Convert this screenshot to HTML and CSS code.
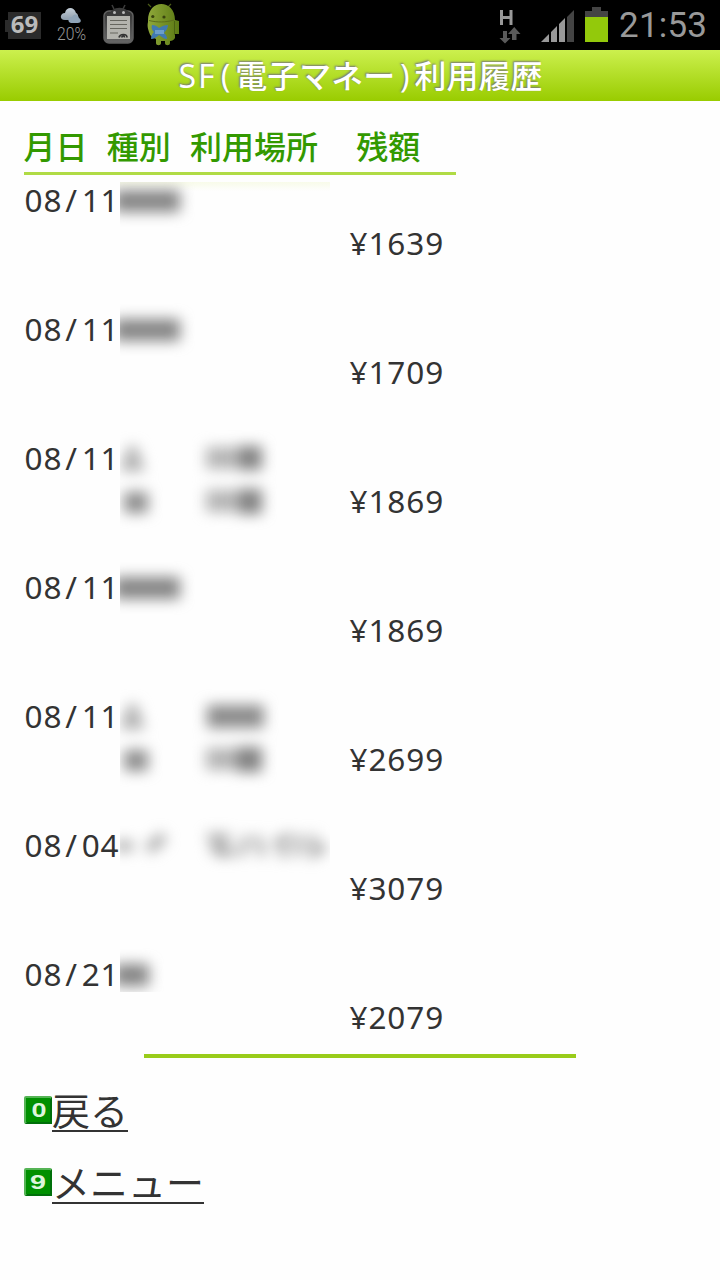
FILE: index.html
```html
<!DOCTYPE html>
<html lang="ja">
<head>
<meta charset="utf-8">
<title>SF(電子マネー)利用履歴</title>
<link rel="stylesheet" href="styles.css">
</head>
<body>
<header class="status">
  <svg class="status-left" width="200" height="50" viewBox="0 0 200 50">
    <defs>
      <linearGradient id="cloud" x2="0" y2="1"><stop stop-color="#c3ced8"/><stop offset="1" stop-color="#8d9cab"/></linearGradient>
      <linearGradient id="bot" x2="1"><stop stop-color="#8fa83a"/><stop offset="1" stop-color="#5c7a14"/></linearGradient>
      <linearGradient id="board" x2="0" y2="1"><stop stop-color="#333"/><stop offset="1" stop-color="#666"/></linearGradient>
    </defs>
    <path d="M8 12h33v27H8v-7H5V20h3z" fill="#2b2b2b"/>
    <text x="24.500" y="33" text-anchor="middle" class="level">69</text>
    <path d="M65 20c-6 0-5-7 0-7 1-6 9-7 11 0 3 1 3 7-1 7z" fill="url(#cloud)"/>
    <path d="M71 23c-4-1-3-6 1-6 2-4 6-3 7 1 3 2 2 5-1 5z" fill="#8fa4b8"/>
    <text x="57" y="39.500" class="rain" textLength="29" lengthAdjust="spacingAndGlyphs">20%</text>
    <path d="M114 9l-2-4M123 9l2-4" stroke="#3d3d3d" stroke-width="1.500"/>
    <rect x="104" y="11" width="29" height="32" rx="5" fill="url(#board)" stroke="#606060" stroke-width="1.500"/>
    <path d="M109 16c1-11 20-11 21 0z" fill="#3b3b3b"/>
    <circle cx="114.500" cy="12.500" r="1.500" fill="#bbb"/><circle cx="123.500" cy="12.500" r="1.500" fill="#bbb"/>
    <path d="M107 16h23v23h-23z" fill="#b4b4ae"/>
    <path d="M110 20.500h17M110 24.500h17M110 28.500h17M110 33h8" stroke="#66665f"/>
    <path d="M119 37.500c1-4 8-4 8 0M121.500 37.500c1-2 3-2 3 0" stroke="#333" stroke-width="1.700" fill="none"/>
    <path d="M151 7l-3-3M168 7l3-3" stroke="#4b5c17" stroke-width="1.200"/>
    <path d="M148 22c-1-24 27-23 27-2l4 1v13h-4v4c-1 2-3 3-5 3v2c0 3-5 3-5 0v-2h-4v2c0 3-5 3-5 0v-4c-3-1-6-3-7-7-1-3-2-6-1-10z" fill="url(#bot)"/>
    <circle cx="152.800" cy="16.500" r="1.600" fill="#39440e"/><circle cx="164" cy="17" r="1.600" fill="#39440e"/>
    <path d="M149 20.500c8 2 17 2 25-.5" stroke="#5b6d1c" fill="none"/>
    <path d="M174.500 21v14" stroke="#4b6212"/>
    <path d="M152 25c3 0 5 1 7 3 3-2 6-3 9-3 0 3-2 6-4 8 2 2 3 3 3 6-3 0-5-2-8-4-2 2-5 4-8 4 0-3 1-5 3-7-2-2-3-4-2-7z" fill="#4079b0"/>
    <path d="M155 30h9v4h-9z" fill="#6b9ecb"/>
  </svg>
  <svg class="status-right" width="240" height="50" viewBox="480 0 240 50">
    <path d="M501.500 10v15M511 10v15M501 17.500h10" stroke="#999" stroke-width="3"/>
    <path d="M503 31h4v7h3.500l-5.500 5.500-5.500-5.500h3.500zM512 40h4.500v-6h4l-6.300-7-6.200 7h4z" fill="#5a5a5a"/>
    <path d="M541 42l8-8v8zM551 32l6-6v16h-6zM559 24l6-6v24h-6z" fill="#999"/>
    <path d="M567 17l7-7v32h-7z" fill="#444"/>
    <path d="M585 17v-6h7V7h9v4h7v6z" fill="#444"/>
    <path d="M585 17h23v25h-23z" fill="#93c90b"/>
    <text x="619" y="36.800" class="clock" textLength="88">21:53</text>
  </svg>
</header>
<h1 class="title"><i>S</i><i>F</i><i>(</i>電子マネー<i>)</i>利用履歴</h1>
<main class="page">
  <div class="columns"><span>月日</span><span>種別</span><span class="wide">利用場所</span><span>残額</span></div>
  <div class="history">
    <div class="entry"><div class="date">08<i>/</i>11</div><div class="balance">¥1639</div></div>
    <div class="entry"><div class="date">08<i>/</i>11</div><div class="balance">¥1709</div></div>
    <div class="entry"><div class="date">08<i>/</i>11</div><div class="balance">¥1869</div></div>
    <div class="entry"><div class="date">08<i>/</i>11</div><div class="balance">¥1869</div></div>
    <div class="entry"><div class="date">08<i>/</i>11</div><div class="balance">¥2699</div></div>
    <div class="entry"><div class="date">08<i>/</i>04</div><div class="balance">¥3079</div></div>
    <div class="entry"><div class="date">08<i>/</i>21</div><div class="balance">¥2079</div></div>
    <svg class="redaction" width="210" height="810" viewBox="0 182 210 810">
      <defs>
        <linearGradient id="edge" x2="0" y2="1"><stop stop-color="#f8fbe9"/><stop offset="1" stop-color="#fefefe"/></linearGradient>
        <filter id="soft" filterUnits="userSpaceOnUse" x="-30" y="150" width="270" height="880" color-interpolation-filters="sRGB"><feGaussianBlur stdDeviation="7"/></filter>
      </defs>
      <path d="M0 182h210v810H0z" fill="#fefefe"/>
      <path d="M0 182h210v9H0z" fill="url(#edge)"/>
      <g filter="url(#soft)">
        <g fill="#858585">
          <path d="M-6 190h66v22H-6zM-6 319h66v22H-6zM-6 577h66v22H-6z"/>
          <path d="M87 705h57v23H87z" fill="#8c8c8c"/>
          <path d="M-6 964h35v22H-6z"/>
        </g>
        <g fill="#828282"><path d="M118 446h24v24h-24zM118 489h24v25h-24zM117 747h25v25h-25z"/></g>
        <g fill="#b5b5b5"><path d="M86 447h31v22H86zM86 490h31v22H86zM86 748h31v22H86z"/></g>
        <g fill="#8c8c8c"><path d="M4 492h24v21H4zM4 750h24v21H4z"/></g>
        <g fill="#adadad"><path d="M9 446h7l9 25H0zM9 704h7l9 25H0z"/></g>
        <g fill="none" stroke="#a6a6a6" stroke-width="7">
          <path d="M-4 846h17M28 850l16-14" stroke-width="10"/>
          <path d="M87 837h23M90 848h20M99 835v18h15M127 836l-6 20M137 836l6 20M154 844l17-9M163 842v16M180 835l-3 21M193 835v19l13-8"/>
        </g>
      </g>
    </svg>
  </div>
  <div class="divider"></div>
  <nav class="links">
    <a href="#"><svg width="28" height="28" viewBox="0 0 28 28"><rect width="28" height="28" rx="2" fill="#55b455"/><path d="M2 2h24v24H2z" fill="#009000"/><path d="M28 1v27H1l2-2h23V3z" fill="#00700a"/><text x="15" y="21" class="key" text-anchor="middle" textLength="15" lengthAdjust="spacingAndGlyphs">0</text></svg><span>戻る</span></a>
    <a href="#"><svg width="28" height="28" viewBox="0 0 28 28"><rect width="28" height="28" rx="2" fill="#55b455"/><path d="M2 2h24v24H2z" fill="#009000"/><path d="M28 1v27H1l2-2h23V3z" fill="#00700a"/><text x="14" y="21" class="key" text-anchor="middle" textLength="16" lengthAdjust="spacingAndGlyphs">9</text></svg><span>メニュー</span></a>
  </nav>
</main>
</body>
</html>
```
FILE: styles.css
```css
* { box-sizing: border-box; }
body {
  margin: 0;
  min-height: 1280px;
  background: #fefefe;
  color: #333;
  font: 32px "Noto Sans", "Noto Sans CJK JP", sans-serif;
}
svg { display: block; }
i { display: inline-block; width: 19.2px; font-style: normal; text-align: center; letter-spacing: 0; }

.status { display: flex; justify-content: space-between; height: 50px; background: #000; }
.level { font: bold 24px "Noto Sans", sans-serif; fill: #bbb; }
.rain { font: 300 19px Roboto, sans-serif; fill: #999; }
.clock { font: 35px Roboto, sans-serif; fill: #999; }

.title {
  display: flex;
  justify-content: center;
  height: 51px;
  margin: 0;
  background: linear-gradient(#ccf04e, #99cc00);
  color: #fff;
  font-size: 32px;
  font-weight: 500;
  line-height: 51px;
  text-shadow: -1px -1px 2px #777;
}
.title i { font-weight: 400; }

.page { padding: 24px 24px 0; }
.columns {
  display: flex;
  gap: 19.2px;
  width: 432px;
  height: 50px;
  border-bottom: 3px solid #b0db45;
  color: #339900;
  font-weight: 500;
  line-height: 44px;
}
.columns span { margin-left: -.5px; margin-right: .5px; }
.columns .wide { margin-right: 19.7px; }

.history { position: relative; height: 879px; padding-top: 3px; }
.entry { height: 129px; font-size: 31.5px; line-height: 43px; letter-spacing: .9px; }
.entry i { padding-right: 2px; }
.date { width: 96px; padding-left: .6px; white-space: nowrap; }
.balance { padding-left: 325.5px; }
.redaction { position: absolute; left: 96px; top: 7px; }

.divider { width: 432px; height: 4px; margin: 0 auto; background: #99cc1a; }
.links { padding-top: 18px; }
.links a { display: flex; height: 72px; color: #333; text-decoration: none; }
.links svg { margin-top: 20px; }
.links span { height: 56px; border-bottom: 2px solid #333; font-size: 38px; line-height: 68px; }
.key { font: bold 20px "Liberation Sans", sans-serif; fill: #ddf5dd; }
```
